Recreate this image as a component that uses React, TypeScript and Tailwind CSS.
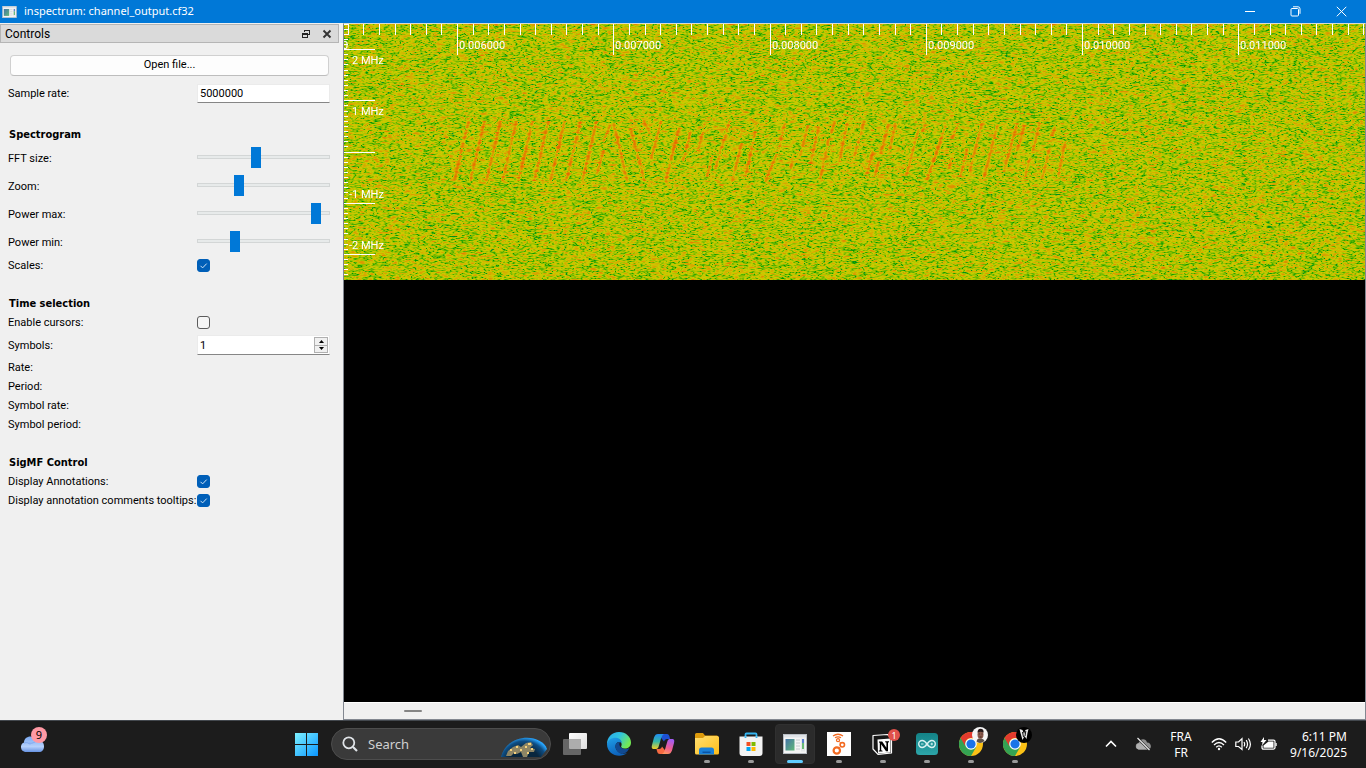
import { useEffect, useRef, useState } from "react";
import type { ReactNode } from "react";

const SPEC_W = 1021;
const SPEC_H = 256;

/* Chirp tracks in spectrogram pixels: [x0, y0, x1, y1] */
const PREAMBLE = Array.from({ length: 9 }, (_, k) => [110 + k * 16, 156, 124 + k * 16, 97]);
const FRAME_A = [
  [20, 195, 40, 125], [40, 100, 58, 50], [70, 45, 110, 215], [120, 60, 162, 215], [160, 35, 178, 75],
  [182, 150, 212, 38], [225, 220, 265, 60], [278, 160, 300, 70], [322, 125, 343, 45], [350, 205, 365, 140],
  [375, 180, 418, 35], [425, 220, 453, 105], [465, 205, 495, 70], [525, 220, 565, 120], [562, 135, 583, 45],
  [600, 180, 606, 150], [630, 140, 652, 50], [660, 165, 685, 50], [690, 210, 715, 90], [722, 75, 733, 40],
].map(([a, b, c, d]) => [246 + a / 3, 84 + b / 3, 246 + c / 3, 84 + d / 3]);
const FRAME_B = [
  [12, 160, 35, 45], [55, 150, 86, 40], [95, 195, 112, 130], [118, 205, 130, 160], [135, 135, 158, 50],
  [162, 125, 180, 45], [212, 200, 250, 60], [260, 70, 270, 48], [275, 215, 330, 50], [340, 180, 348, 150],
  [350, 90, 368, 45], [375, 205, 395, 120], [403, 190, 438, 45], [445, 210, 485, 50], [505, 190, 545, 45],
  [545, 125, 567, 50], [568, 210, 582, 150], [592, 130, 612, 45], [620, 210, 642, 120], [650, 80, 660, 50],
  [668, 200, 690, 100],
].map(([a, b, c, d]) => [491 + a / 3, 84 + b / 3, 491 + c / 3, 84 + d / 3]);
const CHIRPS = [...PREAMBLE, ...FRAME_A, ...FRAME_B];

function makeRandom(seed: number) {
  let s = seed;
  return () => {
    s = (s + 0x6d2b79f5) | 0;
    let t = Math.imul(s ^ (s >>> 15), 1 | s);
    t = (t + Math.imul(t ^ (t >>> 7), 61 | t)) ^ t;
    return ((t ^ (t >>> 14)) >>> 0) / 4294967296;
  };
}

function hsv(h: number, v: number): [number, number, number] {
  const f = (n: number) => {
    const k = (n + h * 6) % 6;
    return 255 * (v - v * Math.max(0, Math.min(k, 4 - k, 1)));
  };
  return [f(5), f(3), f(1)];
}

function paintSpectrogram(canvas: HTMLCanvasElement) {
  const ctx = canvas.getContext("2d");
  if (!ctx) return;
  const W = SPEC_W;
  const H = SPEC_H;
  const rnd = makeRandom(7);
  const gauss = () => Math.sqrt(-2 * Math.log(rnd() + 1e-12)) * Math.cos(2 * Math.PI * rnd());
  const kernel = [0.15, 0.5, 0.85, 1, 0.85, 0.5, 0.15];
  const norm = Math.sqrt(kernel.reduce((a, k) => a + k * k, 0));
  const smooth = () => {
    const out = new Float32Array(W * H);
    for (let y = 0; y < H; y++) {
      const row = Array.from({ length: W + 6 }, gauss);
      for (let x = 0; x < W; x++) {
        let a = 0;
        for (let k = 0; k < 7; k++) a += row[x + k] * kernel[k];
        out[y * W + x] = a / norm;
      }
    }
    const mixed = new Float32Array(W * H);
    for (let i = 0; i < W * H; i++) {
      const up = i >= W ? out[i - W] : out[i];
      mixed[i] = (out[i] + 0.5 * up) / 1.12;
    }
    return mixed;
  };
  const re = smooth();
  const im = smooth();
  for (const [x0, y0, x1, y1] of CHIRPS) {
    const n = Math.max(1, Math.round(Math.abs(y1 - y0)));
    for (let s = 0; s <= n; s++) {
      const y = Math.round(y0 + ((y1 - y0) * s) / n);
      const cx = x0 + ((x1 - x0) * s) / n;
      for (let x = Math.floor(cx - 4); x <= cx + 4; x++) {
        const g = 3.5 * Math.exp(-((x - cx) ** 2) / 3.5);
        re[y * W + x] += g * Math.cos(s * 0.35);
        im[y * W + x] += g * Math.sin(s * 0.35);
      }
    }
  }
  const img = ctx.createImageData(W, H);
  for (let i = 0; i < W * H; i++) {
    const db = 10 * Math.log10((re[i] * re[i] + im[i] * im[i]) / 2 + 1e-6);
    const p = Math.max(0.09, Math.min(0.5, 0.202 - db * 0.0094));
    const [r, g, b] = hsv(p * 0.83, 1 - p);
    img.data.set([r, g, b, 255], i * 4);
  }
  ctx.putImageData(img, 0, 0);
}

const TIME_LABELS = ["0.006000", "0.007000", "0.008000", "0.009000", "0.010000", "0.011000"];
const FREQ_LABELS = [
  { text: "2 MHz", x: 8, y: 40 },
  { text: "1 MHz", x: 8, y: 91 },
  { text: "-1 MHz", x: 5, y: 174 },
  { text: "-2 MHz", x: 5, y: 225 },
];

function Spectrogram() {
  const ref = useRef<HTMLCanvasElement>(null);
  useEffect(() => {
    if (ref.current) paintSpectrogram(ref.current);
  }, []);
  return (
    <div className="relative h-[256px] overflow-hidden">
      <canvas ref={ref} width={SPEC_W} height={SPEC_H} className="block h-full w-full [image-rendering:pixelated]" />
      <svg className="absolute inset-0 h-full w-full" fill="#fff" fontSize="11" shapeRendering="crispEdges">
        {Array.from({ length: 66 }, (_, i) => (
          <rect key={i} x={Math.round(3.625 + i * 15.625)} y="0" width="1" height="11" />
        ))}
        {Array.from({ length: 51 }, (_, i) => (
          <rect key={i} x="0" y={Math.floor(i * 5.12)} width="4" height="1" />
        ))}
        {[25, 76, 128, 179, 230].map((y) => (
          <rect key={y} x="0" y={y} width="31" height="1" />
        ))}
        <text x="-2" y="25">0</text>
        {TIME_LABELS.map((t, i) => (
          <g key={t}>
            <rect x={Math.round(113 + i * 156.25)} y="0" width="1" height="31" />
            <text x={Math.round(113 + i * 156.25) + 2} y="25">{t}</text>
          </g>
        ))}
        {FREQ_LABELS.map((f) => (
          <text key={f.text} x={f.x} y={f.y}>{f.text}</text>
        ))}
      </svg>
    </div>
  );
}

function AppIcon({ className }: { className: string }) {
  return (
    <svg viewBox="0 0 24 20" className={className} aria-hidden="true">
      <defs>
        <linearGradient id="thumb" x1="0" y1="0" x2="1" y2="1">
          <stop offset="0" stopColor="#4474a8" />
          <stop offset="1" stopColor="#62b878" />
        </linearGradient>
      </defs>
      <rect x=".5" y=".5" width="23" height="19" fill="#f5f5f5" stroke="#b9bec4" />
      <rect x="1" y="1" width="22" height="2.5" fill="#dfe3e7" />
      <rect x="2.5" y="5" width="9" height="11.5" fill="url(#thumb)" />
      <path d="M13 6h4M13 9h4M13 12h4M13 15h4" stroke="#c6cace" />
      <rect x="18" y="4.5" width="4" height="13" fill="#e5e8ea" />
      <path d="M20 5v4" stroke="#3565c8" strokeWidth="1.6" />
      <path d="M20 9v6" stroke="#49ae58" strokeWidth="1.6" />
    </svg>
  );
}

const ROW = "grid grid-cols-[189px_1fr] items-center";

function Heading({ children, className }: { children: ReactNode; className?: string }) {
  return <h2 className={`flex h-[19px] items-center pl-px font-['DejaVu_Sans_Condensed','Noto_Sans',sans-serif] text-[11px] font-bold ${className ?? ""}`}>{children}</h2>;
}

function SliderRow({ id, label, value }: { id: string; label: string; value: number }) {
  return (
    <div className={`${ROW} h-[28px]`}>
      <label htmlFor={id}>{label}</label>
      <input
        id={id}
        type="range"
        min={0}
        max={123}
        defaultValue={value}
        className="mb-[5px] h-[21px] w-full appearance-none bg-transparent [&::-webkit-slider-runnable-track]:h-[4px] [&::-webkit-slider-runnable-track]:border [&::-webkit-slider-runnable-track]:border-[#d3d6d6] [&::-webkit-slider-runnable-track]:bg-[#e7eaea] [&::-webkit-slider-thumb]:mt-[-9px] [&::-webkit-slider-thumb]:h-[21px] [&::-webkit-slider-thumb]:w-[10px] [&::-webkit-slider-thumb]:appearance-none [&::-webkit-slider-thumb]:bg-[#0078d7]"
      />
    </div>
  );
}

function CheckRow({ id, label, checked }: { id: string; label: string; checked: boolean }) {
  return (
    <div className={`${ROW} h-[19px]`}>
      <label htmlFor={id} className="whitespace-nowrap">{label}</label>
      <span className="mb-0.5 grid size-[13px]">
        <input
          id={id}
          type="checkbox"
          defaultChecked={checked}
          className="peer size-[13px] appearance-none rounded-[3px] border border-[#5c5c5c] bg-[#f5f5f5] [grid-area:1/1] checked:border-[#005fb8] checked:bg-[#005fb8]"
        />
        <svg viewBox="0 0 13 13" className="pointer-events-none hidden size-[13px] [grid-area:1/1] peer-checked:block" fill="none" stroke="#cfe3f5" strokeWidth="1">
          <path d="M3.5 6.8 5.6 8.9 9.7 4.6" />
        </svg>
      </span>
    </div>
  );
}

function Controls() {
  const [symbols, setSymbols] = useState(1);
  return (
    <aside className="w-[343px] shrink-0 bg-[#f0f0f0] pt-px text-[11px] text-black">
      <header className="mr-[4px] flex h-[19px] items-center border border-[#b5b5b5] bg-[#dadada] pl-1 pr-[6px]">
        <h1 className="flex-1 pt-px font-['Roboto','Noto_Sans',sans-serif] text-[12px]">Controls</h1>
        <button aria-label="Float" className="mr-[11px]">
          <svg viewBox="0 0 10 10" className="size-[10px]" fill="none" stroke="#222" shapeRendering="crispEdges">
            <path d="M3.5 3V1.5h5v4H7M3 1.5h6" />
            <path d="M1 4.5h5.5v4h-5v-4M1 5h5" />
          </svg>
        </button>
        <button aria-label="Close">
          <svg viewBox="0 0 10 10" className="size-[10px]" stroke="#333" strokeWidth="1.9">
            <path d="m1.5 1.5 7 7m0-7-7 7" />
          </svg>
        </button>
      </header>
      <form className="pl-2 pr-[13px] pt-3">
        <button type="button" className="ml-0.5 block h-[21px] w-[319px] rounded border border-[#d0d0d0] border-b-[#bdbdbd] bg-[#fdfdfd]">
          Open file...
        </button>
        <div className={`${ROW} mt-2 h-[20px]`}>
          <label htmlFor="rate">Sample rate:</label>
          <input id="rate" defaultValue="5000000" className="mb-px h-[19px] w-[133px] border border-[#ebebeb] border-b-[#868686] bg-white pl-0.5" />
        </div>
        <Heading className="mt-[22px]">Spectrogram</Heading>
        <SliderRow id="fft" label="FFT size:" value={54} />
        <SliderRow id="zoom" label="Zoom:" value={37} />
        <SliderRow id="pmax" label="Power max:" value={115} />
        <SliderRow id="pmin" label="Power min:" value={33} />
        <CheckRow id="scales" label="Scales:" checked />
        <Heading className="mt-[19px]">Time selection</Heading>
        <CheckRow id="cursors" label="Enable cursors:" checked={false} />
        <div className={`${ROW} h-[26px]`}>
          <label htmlFor="symbols">Symbols:</label>
          <span className="mb-0.5 flex h-[20px] w-[133px] border border-[#ebebeb] border-b-[#868686] bg-white">
            <input
              id="symbols"
              value={symbols}
              onChange={(e) => setSymbols(Number(e.target.value) || 1)}
              className="min-w-0 flex-1 bg-transparent pl-0.5 pt-0.5"
            />
            <span className="flex w-[15px] flex-col py-px pr-px">
              <button type="button" aria-label="Increase" onClick={() => setSymbols(symbols + 1)} className="flex flex-1 items-center justify-center border border-[#b0b0b0] bg-[#f0f0f0]">
                <svg viewBox="0 0 5 3" className="h-[3px] w-[5px]"><path d="M0 3 2.5 0 5 3z" /></svg>
              </button>
              <button type="button" aria-label="Decrease" onClick={() => setSymbols(Math.max(1, symbols - 1))} className="flex flex-1 items-center justify-center border border-t-0 border-[#b0b0b0] bg-[#f0f0f0]">
                <svg viewBox="0 0 5 3" className="h-[3px] w-[5px]"><path d="M0 0 2.5 3 5 0z" /></svg>
              </button>
            </span>
          </span>
        </div>
        {["Rate:", "Period:", "Symbol rate:", "Symbol period:"].map((t) => (
          <p key={t} className="flex h-[19px] items-center">{t}</p>
        ))}
        <Heading className="mt-[19px]">SigMF Control</Heading>
        <CheckRow id="ann" label="Display Annotations:" checked />
        <CheckRow id="tips" label="Display annotation comments tooltips:" checked />
      </form>
    </aside>
  );
}

function Task({ label, running, active, children }: { label: string; running?: boolean; active?: boolean; children: ReactNode }) {
  return (
    <button
      aria-label={label}
      className={`relative mx-[2px] flex h-[40px] w-[40px] items-center justify-center rounded ${active ? "border border-[#303030] bg-[#2b2b2b]" : ""}`}
    >
      {children}
      {running && <span className="absolute bottom-px h-[3px] w-[6px] rounded-full bg-[#9a9a9a]" />}
      {active && <span className="absolute bottom-0 h-[3px] w-[16px] rounded-full bg-[#60cdff]" />}
    </button>
  );
}

function ChromeMark() {
  return (
    <svg viewBox="0 0 24 24" className="size-6">
      <circle cx="12" cy="12" r="12" fill="#fbc116" />
      <path d="M12 12 1.6 6A12 12 0 0 0 12 24l5.2-9z" fill="#34a353" />
      <path d="M1.6 6A12 12 0 0 1 22.4 6H12a6 6 0 0 0-5.2 9z" fill="#e33b2e" />
      <circle cx="12" cy="12" r="5.8" fill="#fff" />
      <circle cx="12" cy="12" r="4.6" fill="#1a73e8" />
    </svg>
  );
}

function Taskbar() {
  return (
    <footer className="flex h-[48px] shrink-0 items-center border-t border-[#43484e] bg-[#1c1c1c] pb-px font-['Noto_Sans','Open_Sans',sans-serif] text-[12px] text-white">
      <div className="w-[284px] pl-[19px]">
        <button aria-label="Weather" className="relative mb-2 block h-[26px] w-[30px]">
          <svg viewBox="0 0 30 28" className="h-[28px] w-[30px]">
            <defs>
              <linearGradient id="cloud" x1="0" y1="0" x2="0" y2="1">
                <stop offset="0" stopColor="#7baaf2" />
                <stop offset=".65" stopColor="#b5d0fb" />
                <stop offset="1" stopColor="#6793e2" />
              </linearGradient>
            </defs>
            <path d="M6 25a5 5 0 0 1-1-9.500C5 9 14 7 19 13.500c4 0 6 2.500 6 6S23 25 20 25z" fill="url(#cloud)" />
            <path d="M5 16c3-1 5 0 6 1.500M10 16c3 1 6-1 9-3" stroke="#81a9ee" fill="none" />
          </svg>
          <span className="absolute right-[2px] top-0 flex size-4 items-center justify-center rounded-full bg-[#ff99a4] text-[11px] text-black">9</span>
        </button>
      </div>
      <nav className="flex items-center">
        <Task label="Start">
          <svg viewBox="0 0 23 23" className="size-[23px]">
            <defs>
              <linearGradient id="win" x1="0" y1="0" x2="23" y2="23" gradientUnits="userSpaceOnUse">
                <stop stopColor="#7df1ff" />
                <stop offset="1" stopColor="#0a95ff" />
              </linearGradient>
            </defs>
            <path d="M0 0h11v11H0zM12 0h11v11H12zM0 12h11v11H0zM12 12h11v11H12z" fill="url(#win)" />
          </svg>
        </Task>
        <label className="ml-[3px] mr-[2px] flex h-[32px] w-[220px] items-center overflow-hidden rounded-full border border-[#4d4d4d] bg-[#3a3a3a] pl-[10px]">
          <svg viewBox="0 0 16 16" className="size-4 shrink-0" fill="none" stroke="#e0e4e8" strokeWidth="1.8">
            <circle cx="6.800" cy="6.800" r="5.500" />
            <path d="m11 11 4 4" strokeWidth="2.200" />
          </svg>
          <input aria-label="Search" placeholder="Search" className="ml-[10px] min-w-0 flex-1 bg-transparent pt-px text-[13px] placeholder:text-[#d0d0d0]" />
          <svg viewBox="0 0 48 22" className="mr-[2px] mt-[7px] h-[22px] w-[48px] shrink-0">
            <defs>
              <radialGradient id="earth" cx="24" cy="28" r="28" gradientUnits="userSpaceOnUse">
                <stop offset=".6" stopColor="#08263e" />
                <stop offset=".85" stopColor="#0e4d83" />
                <stop offset="1" stopColor="#29a6ff" />
              </radialGradient>
            </defs>
            <path d="M1 20C7-4 41-4 47 12l-6 8z" fill="url(#earth)" />
            <path d="M6 19l2-5 5-4 5-2 3 2 5-4 5-1 2 3-3 3 5 1-1 3-5 0-2 5-4 0-2-5-4 2-3-1-3 3z" fill="#8d8565" />
            <path d="M10 13h2M16 10h2M20 13h2M28 7h3M25 10h2M31 12h2M14 16h2M27 16h2" stroke="#f6d27b" strokeWidth="1.800" />
          </svg>
        </label>
        <Task label="Task view">
          <svg viewBox="0 0 24 24" className="size-6">
            <defs>
              <linearGradient id="tv" x1="0" y1="0" x2="1" y2="1"><stop stopColor="#fff" /><stop offset="1" stopColor="#ddd" /></linearGradient>
            </defs>
            <rect x="6" y="1" width="18" height="16" rx="1" fill="url(#tv)" />
            <rect x="0" y="7" width="18" height="16" rx="1" fill="#666" />
            <path d="M6 7h12v10H7a1 1 0 0 1-1-1z" fill="#adadad" />
          </svg>
        </Task>
        <Task label="Edge">
          <svg viewBox="0 0 24 24" className="size-6">
            <defs>
              <linearGradient id="e1" x1="0" y1="0" x2="1" y2=".5"><stop stopColor="#2aa7e8" /><stop offset=".5" stopColor="#2fc3df" /><stop offset="1" stopColor="#72ea54" /></linearGradient>
              <linearGradient id="e2" x1="0" y1="0" x2=".4" y2="1"><stop stopColor="#1fa0e8" /><stop offset="1" stopColor="#0d62bb" /></linearGradient>
            </defs>
            <path d="M0 12C0 5 5 0 12 0s12 5 12 10.500c0 4-3 6-6 6-3.500 0-4.500-1.500-3.500-3C16 9 8 5 0 12z" fill="url(#e1)" />
            <path d="M0 12C2 4 14 4 15 11c-4-3-8 1-6 6 2 4 7 6 11 4-7 6-20 2-20-9z" fill="url(#e2)" />
            <path d="M9 17c-2-5 1-7 4-7-2 3 1 7 5 7 2 0 3.500-.5 4.500-1-2 4-4 5-7 6-3-.5-5.500-2-6.500-5z" fill="#114a91" />
          </svg>
        </Task>
        <Task label="Copilot">
          <svg viewBox="0 0 24 24" className="size-6">
            <defs>
              <linearGradient id="c1" x1="0" y1="0" x2="0" y2="1"><stop stopColor="#218cf2" /><stop offset=".5" stopColor="#36b7a6" /><stop offset="1" stopColor="#f4cf24" /></linearGradient>
              <linearGradient id="c2" x1=".5" y1="0" x2=".2" y2="1"><stop stopColor="#a35cf0" /><stop offset=".55" stopColor="#ef5c91" /><stop offset="1" stopColor="#ff9a5b" /></linearGradient>
            </defs>
            <path d="M7 2h9c1.500 0 2 1 2.500 2.500L19 7h-3c-1.500 0-2.500 1-3 2.500z" fill="#1d50d3" />
            <path d="M17 22H9c-2 0-2.500-1-3-3l-.5-2H8c2 0 2.500-1 3-2.500z" fill="#f66a42" />
            <path d="M7 2h6c-2 1-3 4-4 8l-1.500 5C7 16.500 6 17 4 17H3c-2.500 0-2.500-2-2-4l2-7.500C4 3 5 2 7 2z" fill="url(#c1)" />
            <path d="M17 22h-6c2-1 3-4 4-8l1.500-5c.5-1.500 1.500-2 3-2H21c2.500 0 2.500 2 2 4l-2 7.500c-1 2.500-2 3.500-4 3.500z" fill="url(#c2)" />
          </svg>
        </Task>
        <Task label="File Explorer" running>
          <svg viewBox="0 0 24 24" className="size-6">
            <defs><linearGradient id="fo" x1="0" y1="0" x2="1" y2="1"><stop stopColor="#ffdf72" /><stop offset="1" stopColor="#ffbd18" /></linearGradient></defs>
            <path d="M0 2.500Q0 1 1.500 1H8l2 2.500h12q1 0 1 1.500v3H0z" fill="#dd9a0b" />
            <path d="M0 6h8l2-2h12.500Q24 4 24 5.500V21q0 1.500-1.500 1.500h-21Q0 22.500 0 21z" fill="url(#fo)" />
            <path d="M4 22.500v-4.500q0-2.500 2.500-2.500h10Q19 15.500 19 18v4.500z" fill="#1a80d8" />
            <path d="M7.500 19.500h8v1.500h-8z" fill="#0b54a4" />
          </svg>
        </Task>
        <Task label="Microsoft Store" running>
          <svg viewBox="0 0 24 24" className="size-6">
            <path d="M6.500 5V2.500Q6.500 1.500 7.500 1.500h9q1 0 1 1V5" fill="none" stroke="#35b5f1" strokeWidth="1.800" />
            <path d="M.5 4.500h23V21q0 3-3 3h-17q-3 0-3-3z" fill="#f3f3f3" />
            <path d="M6.500 6v-1.500M17.500 6v-1.500" stroke="#35b5f1" strokeWidth="1.800" />
            <path d="M7.500 10h4v4h-4z" fill="#f25022" /><path d="M12.500 10h4v4h-4z" fill="#7fba00" />
            <path d="M7.500 15h4v4h-4z" fill="#00a4ef" /><path d="M12.500 15h4v4h-4z" fill="#ffb900" />
          </svg>
        </Task>
        <Task label="inspectrum" active><AppIcon className="h-[20px] w-[24px]" /></Task>
        <Task label="GNU Radio" running>
          <svg viewBox="0 0 24 24" className="size-6" fill="none" stroke="#f26a21">
            <rect width="24" height="24" fill="#fff" stroke="none" />
            <path d="M6 4q5-3.500 10 0M8 5.800q3-2 6 0" strokeWidth="1.300" />
            <circle cx="11" cy="8.200" r="1.500" strokeWidth="1.300" />
            <circle cx="15.300" cy="12.800" r="2.200" strokeWidth="1.600" />
            <circle cx="9.800" cy="18.500" r="3.200" strokeWidth="2.200" />
            <path d="m12.200 9.500 1.300 1.400M13.600 14.600l-1.400 1.400" strokeWidth="1" />
          </svg>
        </Task>
        <Task label="Notion" running>
          <svg viewBox="0 0 24 24" className="size-6">
            <path d="M2 3.500 16.500 2.500 20.500 6v15L7 22.300 2 17z" fill="#161616" stroke="#fff" strokeWidth="1.200" strokeLinejoin="round" />
            <path d="M6.500 7.500 19.500 6.500v14L7 21.500z" fill="#fff" />
            <path d="M8 9.500h3.200l4.200 6.300V10.500l-1.200-.3v-.9H18v.9l-1 .3v8.800h-2l-4.800-7v6l1.300.4v.8H7.800v-.8l1-.4v-7.600l-.8-.3z" fill="#000" />
          </svg>
          <span className="absolute right-[3px] top-[5px] flex size-3 items-center justify-center rounded-full bg-[#e0524b] text-[9px] leading-none">1</span>
        </Task>
        <Task label="Arduino IDE" running>
          <svg viewBox="0 0 24 24" className="size-6" fill="none">
            <defs><linearGradient id="ar" x1="0" y1="0" x2="0" y2="1"><stop stopColor="#138286" /><stop offset="1" stopColor="#2da5a9" /></linearGradient></defs>
            <rect x="1" y="1" width="22" height="22" rx="3.500" fill="url(#ar)" />
            <path d="M12 12c-2-3-3.500-3.500-4.800-3.500a3.500 3.500 0 0 0 0 7c1.300 0 2.800-.5 4.800-3.500s3.500-3.500 4.800-3.500a3.500 3.500 0 0 1 0 7c-1.300 0-2.800-.5-4.800-3.500z" stroke="#d9f2f2" strokeWidth="1.400" />
            <path d="M6 12h2.500M15.500 12h2.500M16.800 10.700v2.600" stroke="#d9f2f2" strokeWidth=".9" />
          </svg>
        </Task>
        <Task label="Chrome, first profile" running>
          <ChromeMark />
          <svg viewBox="0 0 16 16" className="absolute right-[3px] top-[3px] size-4">
            <circle cx="8" cy="8" r="8" fill="#f5f5f5" />
            <path d="M4.500 14.500q.5-2.500 2-3h3q2.500.5 3 2.500Q8 17.500 4.500 14.500z" fill="#5b5048" />
            <ellipse cx="8.500" cy="7.500" rx="3" ry="4.300" fill="#87584a" />
            <path d="M5.500 5.500q0-3.500 3-3.700Q12 2 11.600 5.500q-3-1.500-6.100 0z" fill="#24191a" />
            <path d="M6.800 7h1M9.500 7h1M7.600 10h2" stroke="#3b211c" strokeWidth=".8" />
          </svg>
        </Task>
        <Task label="Chrome, second profile" running>
          <ChromeMark />
          <svg viewBox="0 0 16 16" className="absolute right-[3px] top-[3px] size-4">
            <circle cx="8" cy="8" r="8" fill="#000" />
            <path d="m3.500 2 3 1 1.500 4 1.500-4 3-1-1 4-1 6-2-3-2 4-2-7z" fill="#ececec" />
            <path d="m6.500 5 1 5M9.800 4 9 9" stroke="#111" />
          </svg>
        </Task>
      </nav>
      <div className="ml-auto flex items-center pr-[19px]">
        <button aria-label="Show hidden icons" className="mr-[18px]">
          <svg viewBox="0 0 12 8" className="h-[8px] w-[12px]" fill="none" stroke="#fff" strokeWidth="1.600"><path d="m1 6.500 5-5 5 5" /></svg>
        </button>
        <button aria-label="OneDrive" className="mr-[19px]">
          <svg viewBox="0 0 16 14" className="h-[14px] w-[16px]">
            <path d="M3.500 12.500a3.300 3.300 0 0 1 0-6.500C5 1 11 1 12 5.500c5 0 5 7 1 7z" fill="#8f8f8f" />
            <path d="M2 7q3-2 6 1l5 4.500H3.500Q0 11 2 7z" fill="#b0b0b0" />
            <path d="m2.500 1 12 12" stroke="#1c1c1c" strokeWidth="2.400" /><path d="m2.500 1 12 12" stroke="#e8e8e8" strokeWidth="1.200" />
          </svg>
        </button>
        <button className="mr-[19px] w-[22px] pt-px text-center leading-4">FRA<br />FR</button>
        <button aria-label="Network, volume and battery" className="mr-[13px] flex items-center gap-2">
          <svg viewBox="0 0 16 14" className="h-[14px] w-[16px]" fill="none" stroke="#fff" strokeWidth="1.300">
            <path d="M.8 5.500q7.200-7.500 14.400 0M3 8q5-5 10 0M5.200 10.300q2.800-2.800 5.600 0" /><circle cx="8" cy="12" r="1.200" fill="#fff" stroke="none" />
          </svg>
          <svg viewBox="0 0 17 14" className="h-[14px] w-[17px]" fill="none" stroke="#fff" strokeWidth="1.200">
            <path d="M.8 5v4.500h2.700L7 12.500V1.700L3.500 5z" /><path d="M9 5q1.300 2.200 0 4.400M11.200 3.200q2.600 4 0 8M13.400 1.500q4 5.700 0 11.400" />
          </svg>
          <svg viewBox="0 0 17 14" className="h-[14px] w-[17px]">
            <path d="M8 3.100h5.500q1.500 0 1.500 1.500v6q0 1.500-1.500 1.500h-10Q2 12.100 2 10.600V8.500" fill="none" stroke="#fff" strokeWidth="1.300" />
            <path d="M3.500 10.800V8.500L8.500 4.500H13.500v6.300zM15.500 6h1.200v3h-1.200z" fill="#fff" />
            <path d="M4 0 .5 5h2L2 8.500 6.500 3H4z" fill="#fff" />
          </svg>
        </button>
        <time className="whitespace-nowrap pt-px text-right leading-4">6:11 PM<br />9/16/2025</time>
      </div>
    </footer>
  );
}

export default function App() {
  return (
    <div className="flex min-h-screen flex-col bg-[#f0f0f0] font-['Roboto','Noto_Sans',sans-serif]">
      <div className="flex h-[23px] shrink-0 items-center bg-[#0078d7] pl-[2px] font-['Noto_Sans','Open_Sans',sans-serif] text-[11px] text-white">
        <AppIcon className="mr-[7px] h-[12px] w-[15px]" />
        <span className="flex-1">inspectrum: channel_output.cf32</span>
        <div className="flex h-full items-center gap-[35px] pr-[19px]">
          <button aria-label="Minimize"><svg viewBox="0 0 11 11" className="size-[11px]" stroke="#fff" shapeRendering="crispEdges"><path d="M.5 5.500h10" /></svg></button>
          <button aria-label="Restore" className="-mt-px">
            <svg viewBox="0 0 11 11" className="size-[11px]" fill="none" stroke="#fff"><rect x="1" y="2.500" width="7.500" height="7.500" rx="1" /><path d="M3 .8h5q2 0 2 2v5" /></svg>
          </button>
          <button aria-label="Close window" className="-mt-px"><svg viewBox="0 0 11 11" className="size-[11px]" stroke="#fff"><path d="m.8.8 9.500 9.500m0-9.500L.8 10.300" /></svg></button>
        </div>
      </div>
      <div className="flex flex-1">
        <Controls />
        <main className="flex min-w-0 flex-1 flex-col border border-[#828790] border-t-[#d8dcd0] bg-black">
          <Spectrogram />
          <div className="flex-1" />
          <div className="h-[17px] border-t border-white bg-[#f0f0f0] pl-[60px] pt-[7px]">
            <div className="h-[2px] w-[18px] rounded-full bg-[#858585]" />
          </div>
        </main>
      </div>
      <Taskbar />
    </div>
  );
}
